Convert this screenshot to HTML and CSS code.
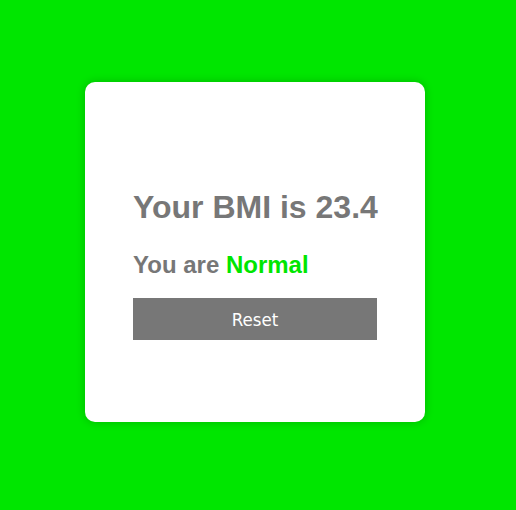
FILE: index.html
```html
<!DOCTYPE html>
<html>
<head>
<meta charset="utf-8">
<link rel="stylesheet" href="styles.css">
</head>
<body>
<div class="page">
  <div class="card">
    <h1 class="title">Your BMI is 23.4</h1>
    <h2 class="status">You are <span class="normal">Normal</span></h2>
    <button class="reset">Reset</button>
  </div>
</div>
</body>
</html>
```
FILE: styles.css
```css
html, body {
  margin: 0;
  padding: 0;
}
body {
  background: #00e600;
  font-family: "Liberation Sans", Arial, sans-serif;
}
.page {
  height: 510px;
  display: flex;
  align-items: center;
  justify-content: center;
  padding: 0 6px 6px 0;
  box-sizing: border-box;
}
.card {
  width: 340px;
  box-sizing: border-box;
  background: #fff;
  border-radius: 10px;
  box-shadow: 0 0 10px rgba(0, 0, 0, 0.2);
  padding: 107px 48px 82px;
  display: flex;
  flex-direction: column;
}
.title {
  margin: 0;
  font-size: 32px;
  font-weight: bold;
  color: #777;
  white-space: nowrap;
}
.status {
  margin: 25px 0 0;
  font-size: 24px;
  font-weight: bold;
  color: #777;
}
.normal {
  color: #00e600;
}
.reset {
  margin-top: 19px;
  height: 42px;
  border: none;
  background: #777;
  color: #fff;
  font-family: "DejaVu Sans Condensed", "DejaVu Sans", sans-serif;
  font-size: 18.5px;
  padding: 0;
  cursor: pointer;
}
```
